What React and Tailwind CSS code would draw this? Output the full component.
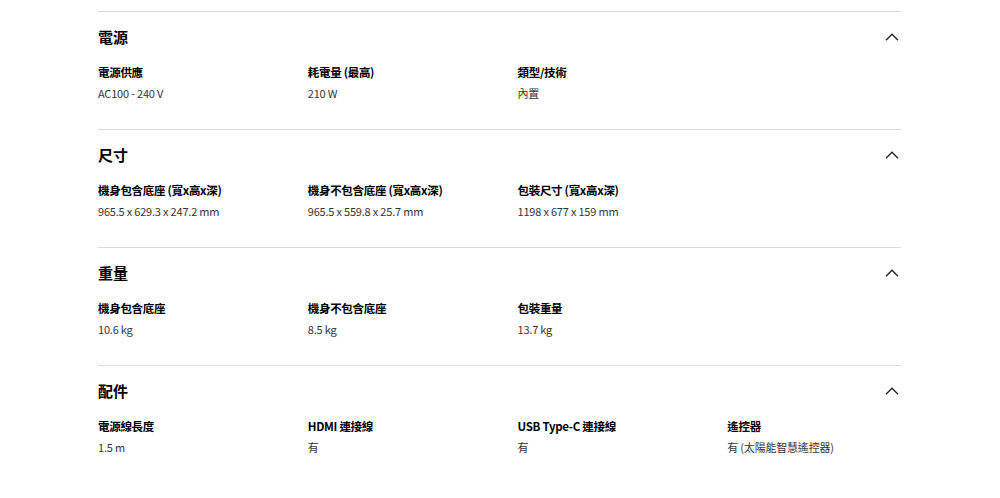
const SECTIONS = [
  {
    title: '電源',
    specs: [
      ['電源供應', 'AC100 - 240 V'],
      ['耗電量 (最高)', '210 W'],
      ['類型/技術', '內置'],
    ],
  },
  {
    title: '尺寸',
    specs: [
      ['機身包含底座 (寬x高x深)', '965.5 x 629.3 x 247.2 mm'],
      ['機身不包含底座 (寬x高x深)', '965.5 x 559.8 x 25.7 mm'],
      ['包裝尺寸 (寬x高x深)', '1198 x 677 x 159 mm'],
    ],
  },
  {
    title: '重量',
    specs: [
      ['機身包含底座', '10.6 kg'],
      ['機身不包含底座', '8.5 kg'],
      ['包裝重量', '13.7 kg'],
    ],
  },
  {
    title: '配件',
    specs: [
      ['電源線長度', '1.5 m'],
      ['HDMI 連接線', '有'],
      ['USB Type-C 連接線', '有'],
      ['遙控器', '有 (太陽能智慧遙控器)'],
    ],
  },
];

function Chevron() {
  return (
    <svg width="14" height="8" viewBox="0 0 14 8" fill="none" className="mr-[2px]">
      <polyline points="1,7.2 7,1.2 13,7.2" stroke="#222" strokeWidth="1.3" />
    </svg>
  );
}

function SpecSection({ title, specs }) {
  return (
    <section className="border-t border-[#dcdcdc] pt-[15px] pb-[27px]">
      <div className="flex items-center justify-between h-[20px]">
        <h2 className="text-[15px] font-bold text-black leading-[20px]">{title}</h2>
        <Chevron />
      </div>
      <div className="grid grid-cols-4 gap-x-[36px] mt-[16px]">
        {specs.map(([label, value]) => (
          <div key={label}>
            <p className="text-[11.5px] font-bold text-black leading-[18px] tracking-[-0.3px]">{label}</p>
            <p className="text-[11px] text-[#363636] leading-[18px] mt-[3px] tracking-[-0.2px]">{value}</p>
          </div>
        ))}
      </div>
    </section>
  );
}

export default function App() {
  return (
    <div
      className="w-[1000px] h-[498px] bg-white pt-[11px] overflow-hidden"
      style={{ fontFamily: '"Noto Sans CJK TC", "Noto Sans", sans-serif' }}
    >
      <div className="w-[803px] ml-[98px]">
        {SECTIONS.map(s => (
          <SpecSection key={s.title} {...s} />
        ))}
      </div>
    </div>
  );
}
